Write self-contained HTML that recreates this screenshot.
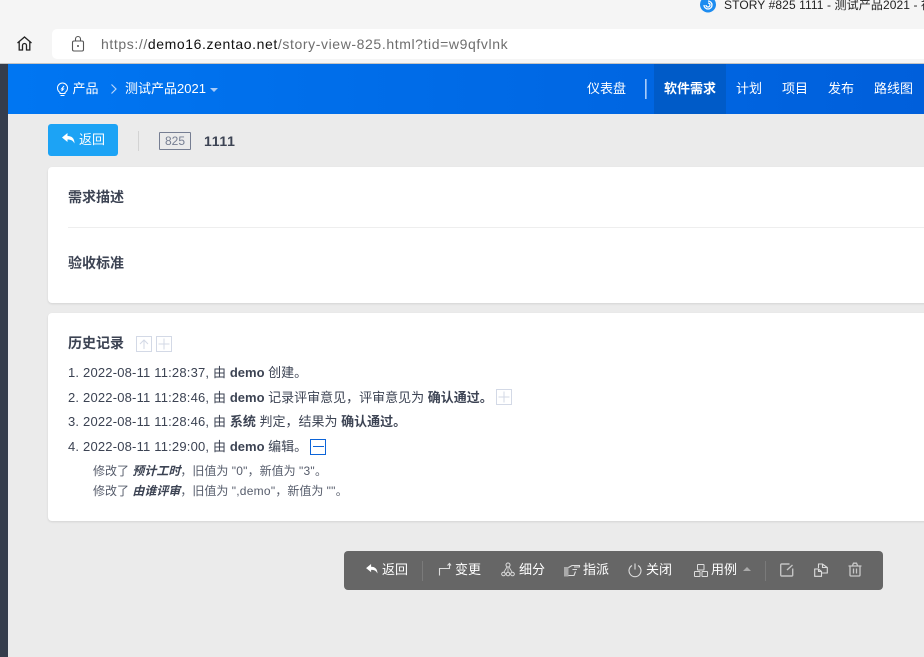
<!DOCTYPE html>
<html lang="zh"><head><meta charset="utf-8"><title>STORY #825 1111</title>
<style>
html,body{margin:0;padding:0}
body{width:924px;height:657px;position:relative;overflow:hidden;background:#ebebeb;font-family:"Liberation Sans","Noto Sans CJK SC",sans-serif;color:#3c4353}
.a{position:absolute;white-space:nowrap}
.t{position:absolute;white-space:nowrap;line-height:20px;height:20px}
svg{position:absolute;overflow:visible;fill:none}
.n{color:#fff;font-size:13px;top:79px}
.h{font-size:13px;color:#3c4353}
.d{letter-spacing:.19px}
.s{font-size:12px;color:#565c6b}
.s b{color:#3c4353}
.l{letter-spacing:.25px}
.b{color:#fff;font-size:13px;top:560px}
.box{position:absolute;width:14px;height:14px;border:1px solid #d3d9e6;box-sizing:content-box}
</style></head><body>
<div class="a" style="left:0;top:0;width:924px;height:63px;background:#f5f5f5;border-bottom:1px solid #c4c4c4"></div>
<div class="a" style="left:52px;top:29px;width:880px;height:30px;background:#fff;border-radius:5px"></div>
<svg style="left:16px;top:35px" width="17" height="17" viewBox="0 0 17 17"><path d="M1.500 8L8.500 2L15.500 8M3.200 6.800V15H6.500V10.500a2 2 0 0 1 4 0V15H13.800V6.800" stroke="#222" stroke-width="1.300"/></svg>
<svg style="left:71px;top:35px" width="14" height="17" viewBox="0 0 14 17"><rect x="1.500" y="6" width="11" height="10" rx="1.500" stroke="#555" stroke-width="1.100"/><path d="M4.500 6V4a2.500 2.500 0 0 1 5 0V6" stroke="#555" stroke-width="1.100"/><circle cx="7" cy="11" r="1" fill="#555"/></svg>
<div class="t" style="left:101px;top:34px;font-size:14px;color:#6e6e6e;letter-spacing:.6px">https://<span style="color:#111">demo16.zentao.net</span>/story-view-825.html?tid=w9qfvlnk</div>
<svg style="left:700px;top:-4px" width="16" height="17" viewBox="0 0 16 17"><circle cx="8" cy="8.500" r="8" fill="#1d8cf0"/><path d="M4 9a4 4 0 1 0 4-4M6 9a2 2 0 1 0 2-2" stroke="#fff" stroke-width="1.300"/></svg>
<div class="t" style="left:724px;top:-5px;font-size:12px;color:#222;letter-spacing:.1px">STORY #825 1111 - 测试产品2021 - 禅</div>

<div class="a" style="left:0;top:64px;width:8px;height:593px;background:#353d4c"></div>
<div class="a" style="left:8px;top:64px;width:916px;height:50px;background:linear-gradient(90deg,#0076f2,#005fdb)"></div>
<svg style="left:56px;top:81px" width="13" height="16" viewBox="0 0 13 16"><path d="M4 11.500C2.500 10.500 1.500 9 1.500 7a5 5 0 0 1 10 0C11.500 9 10.500 10.500 9 11.500V12.500H4ZM4.500 14.500H8.500M8 5L5.500 8H7.500L5.500 10" stroke="#fff" stroke-width="1"/></svg>
<div class="t n" style="left:72.500px">产品</div>
<svg style="left:110px;top:83px" width="8" height="12" viewBox="0 0 8 12"><path d="M1.500 1.500L6 6L1.500 10.500" stroke="#b9d6fb" stroke-width="1.200"/></svg>
<div class="t n" style="left:125px">测试产品2021</div>
<div class="a" style="left:210px;top:88px;width:0;height:0;border:4px solid transparent;border-top:4px solid #a9cbf7"></div>
<div class="t n" style="left:587px">仪表盘</div>
<div class="a" style="left:645px;top:79px;width:1px;height:20px;background:#a6cbf8;border-right:1px solid #6aa6f2"></div>
<div class="a" style="left:654px;top:64px;width:72px;height:50px;background:#005bc8"></div>
<div class="t n" style="left:664px;font-weight:700">软件需求</div>
<div class="t n" style="left:736px">计划</div>
<div class="t n" style="left:782px">项目</div>
<div class="t n" style="left:828px">发布</div>
<div class="t n" style="left:874px">路线图</div>

<div class="a" style="left:48px;top:124px;width:70px;height:32px;background:#1ca3f5;border-radius:3px"></div>
<svg style="left:62px;top:133px" width="13" height="11" viewBox="0 0 13 11"><path d="M0 4.500L5.500 0V3C10 3 12.500 5.500 12.500 10.500C11 7.500 9 6.500 5.500 6.500V9Z" fill="#fff"/></svg>
<div class="t" style="left:79px;top:130px;font-size:13px;color:#fff">返回</div>
<div class="a" style="left:138px;top:131px;width:1px;height:20px;background:#d3d3d3"></div>
<div class="a" style="left:159px;top:132px;width:32px;height:18px;box-sizing:border-box;border:1px solid #767e92;border-radius:1px;font-size:12px;line-height:16px;text-align:center;color:#767e92">825</div>
<div class="t" style="left:204px;top:131px;font-size:14px;font-weight:700;letter-spacing:.7px">1111</div>

<div class="a" style="left:48px;top:167px;width:890px;height:136px;background:#fff;border-radius:4px;box-shadow:0 1px 2px rgba(0,0,0,.1)"></div>
<div class="t" style="left:68px;top:187px;font-size:14px;font-weight:700">需求描述</div>
<div class="a" style="left:68px;top:227px;width:860px;height:1px;background:#eee"></div>
<div class="t" style="left:68px;top:253px;font-size:14px;font-weight:700">验收标准</div>

<div class="a" style="left:48px;top:313px;width:890px;height:208px;background:#fff;border-radius:4px;box-shadow:0 1px 2px rgba(0,0,0,.1)"></div>
<div class="t" style="left:68px;top:333px;font-size:14px;font-weight:700">历史记录</div>
<div class="box" style="left:136px;top:336px"></div>
<svg style="left:137px;top:337px" width="14" height="14" viewBox="0 0 14 14"><path d="M7 12V3M3 7L7 3L11 7" stroke="#d3d9e6"/></svg>
<div class="box" style="left:156px;top:336px"></div>
<svg style="left:157px;top:337px" width="14" height="14" viewBox="0 0 14 14"><path d="M7 1.500V12.500M1.500 7H12.500" stroke="#d3d9e6"/></svg>
<div class="t h" style="left:68px;top:362.500px"><span class="d">1. 2022-08-11 11:28:37, 由</span> <b>demo</b> 创建。</div>
<div class="t h" style="left:68px;top:387.500px"><span class="d">2. 2022-08-11 11:28:46, 由</span> <b>demo</b> 记录评审意见，评审意见为 <b>确认通过。</b></div>
<div class="box" style="left:496px;top:389px"></div>
<svg style="left:497px;top:390px" width="14" height="14" viewBox="0 0 14 14"><path d="M7 1.500V12.500M1.500 7H12.500" stroke="#d3d9e6"/></svg>
<div class="t h" style="left:68px;top:411.500px"><span class="d">3. 2022-08-11 11:28:46, 由</span> <b>系统</b> 判定，结果为 <b>确认通过。</b></div>
<div class="t h" style="left:68px;top:436.500px"><span class="d">4. 2022-08-11 11:29:00, 由</span> <b>demo</b> 编辑。</div>
<div class="box" style="left:310px;top:439px;border-color:#0c64d8"></div>
<div class="a" style="left:313px;top:446px;width:11px;height:1px;background:#0c64d8"></div>
<div class="t s" style="left:93px;top:461px">修改了 <b><i>预计工时</i></b>，旧值为 <span class="l">"0"</span>，新值为 <span class="l">"3"</span>。</div>
<div class="t s" style="left:93px;top:481px">修改了 <b><i>由谁评审</i></b>，旧值为 <span class="l">",demo"</span>，新值为 <span class="l">""</span>。</div>

<div class="a" style="left:344px;top:551px;width:539px;height:39px;background:#666;border-radius:4px"></div>
<svg style="left:366px;top:564px" width="12" height="10" viewBox="0 0 13 11"><path d="M0 4.500L5.500 0V3C10 3 12.500 5.500 12.500 10.500C11 7.500 9 6.500 5.500 6.500V9Z" fill="#fff"/></svg>
<div class="t b" style="left:382px">返回</div>
<div class="a" style="left:422px;top:561px;width:1px;height:20px;background:#7a7a7a"></div>
<svg style="left:438px;top:562px" width="14" height="16" viewBox="0 0 14 16"><path d="M1.500 13.500V6.500H11.500V1.500M9.500 3.500L11.500 1.500L13 3.500" stroke="#ddd" stroke-width="1.100"/></svg>
<div class="t b" style="left:455px">变更</div>
<svg style="left:501px;top:562px" width="14" height="15" viewBox="0 0 14 15"><circle cx="7" cy="3" r="2" stroke="#ddd"/><circle cx="2.500" cy="12" r="1.800" stroke="#ddd"/><circle cx="7" cy="12" r="1.800" stroke="#ddd"/><circle cx="11.500" cy="12" r="1.800" stroke="#ddd"/><path d="M6 5L3 10M8 5L11 10M7 5V10" stroke="#ddd" stroke-width=".8"/></svg>
<div class="t b" style="left:519px">细分</div>
<svg style="left:564px;top:563px" width="16" height="14" viewBox="0 0 16 14"><path d="M0 4H4.500V13.500H0Z" fill="#aaa"/><path d="M4.500 4.500L8 2.500H15.500V4H10M4.500 12.500H10L11.500 8.500M8.500 6.500H13" stroke="#ddd" stroke-width="1.100"/></svg>
<div class="t b" style="left:583px">指派</div>
<svg style="left:628px;top:562px" width="14" height="15" viewBox="0 0 14 15"><path d="M4 3.500A6 6 0 1 0 10 3.500M7 1.500V7.500" stroke="#ddd" stroke-width="1.100"/></svg>
<div class="t b" style="left:646px">关闭</div>
<svg style="left:694px;top:563px" width="14" height="14" viewBox="0 0 14 14"><rect x="3.500" y="1.500" width="6.500" height="5.500" rx=".5" stroke="#ddd"/><rect x=".5" y="8.500" width="5.500" height="5" rx=".5" stroke="#ddd"/><rect x="8" y="8.500" width="5.500" height="5" rx=".5" stroke="#ddd"/></svg>
<div class="t b" style="left:711px">用例</div>
<div class="a" style="left:743px;top:567px;width:0;height:0;border:4px solid transparent;border-bottom:4px solid #aaa;border-top:0"></div>
<div class="a" style="left:765px;top:561px;width:1px;height:20px;background:#7a7a7a"></div>
<svg style="left:780px;top:563px" width="14" height="14" viewBox="0 0 14 14"><path d="M12.700 5.500V12a1 1 0 0 1-1 1H1.700a1 1 0 0 1-1-1V2a1 1 0 0 1 1-1H9.500M12.500 2L7 7" stroke="#c4c4c4" stroke-width="1.400"/></svg>
<svg style="left:814px;top:563px" width="14" height="14" viewBox="0 0 14 14"><path d="M.7 6H4.500L7.500 8.500V13.300H.7ZM4.500 6V8.500H7.500M4.500 5V1H8.500L13.300 4.500V10H7.500M8.500 1V4.500H13.300" stroke="#ddd" stroke-width="1.100"/></svg>
<svg style="left:848px;top:562px" width="14" height="15" viewBox="0 0 14 15"><path d="M.5 4H13.500M4.500 3.500L5.500 1.200H8.500L9.500 3.500M2 4V13a1 1 0 0 0 1 1H11a1 1 0 0 0 1-1V4M5.500 6.500V11.500M8.500 6.500V11.500" stroke="#c8c8c8" stroke-width="1.300"/></svg>
</body></html>
